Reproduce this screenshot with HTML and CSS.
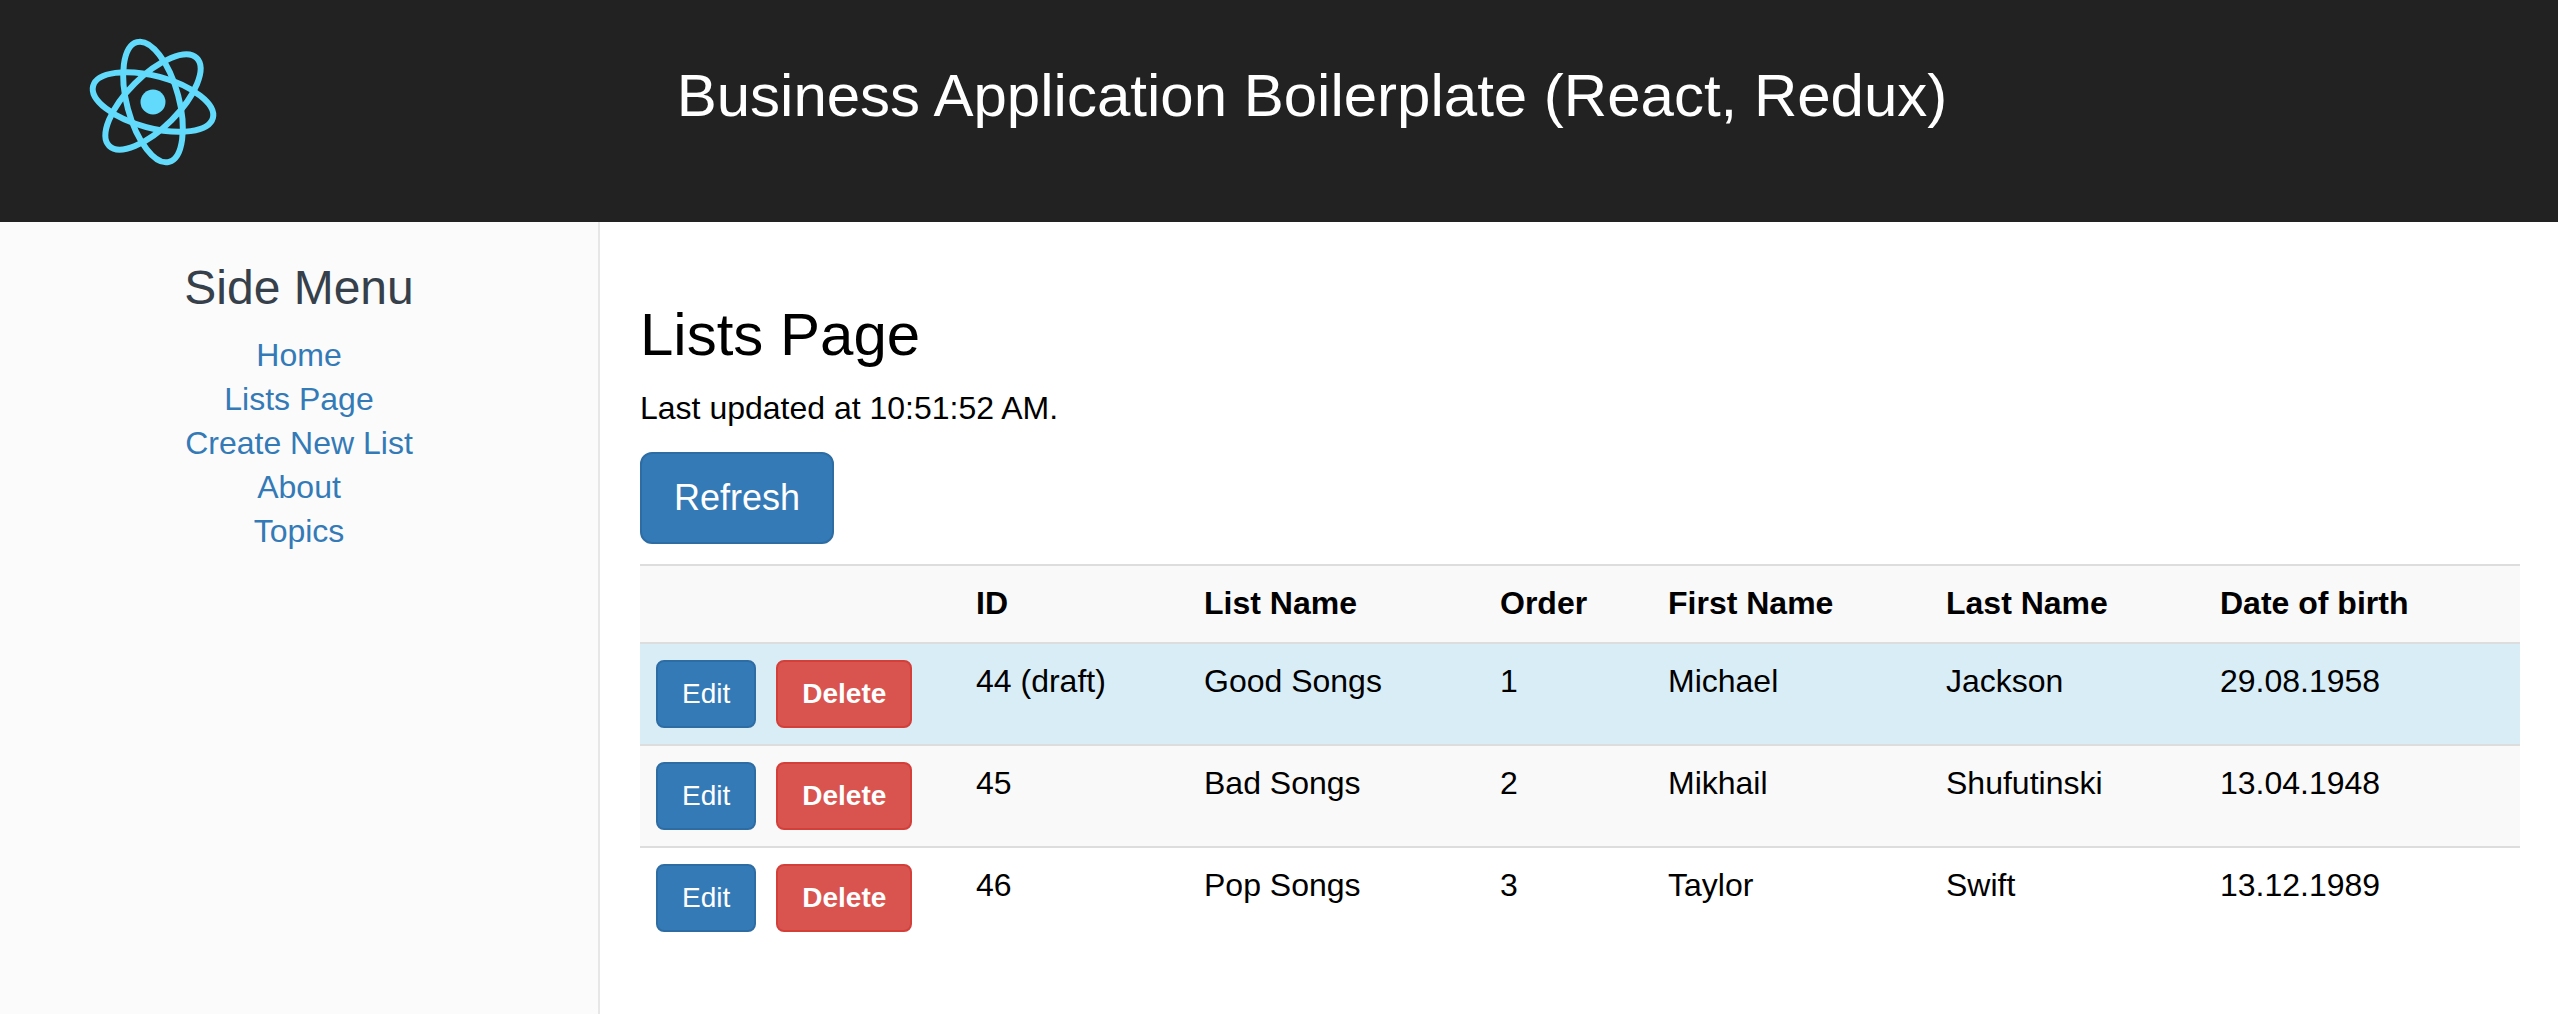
FILE: index.html
```html
<!doctype html>
<html lang="en">
<head>
<meta charset="utf-8">
<title>Business Application Boilerplate</title>
<link rel="stylesheet" href="styles.css">
</head>
<body>

	<header class="appHeader">
		<svg class="appLogo" viewBox="0 0 140 140" width="140" height="140" aria-hidden="true">
			<g fill="none" stroke="#61dafb" stroke-width="6">
				<ellipse cx="70" cy="70" rx="62" ry="26" transform="rotate(15 70 70)"/>
				<ellipse cx="70" cy="70" rx="62" ry="26" transform="rotate(75 70 70)"/>
				<ellipse cx="70" cy="70" rx="62" ry="26" transform="rotate(135 70 70)"/>
			</g>
			<circle cx="70" cy="70" r="12.5" fill="#61dafb"/>
		</svg>
		<h1 class="appTitle">Business Application Boilerplate (React, Redux)</h1>
	</header>

	<div class="appBody">

		<nav class="sideMenu">
			<h3>Side Menu</h3>
			<a href="#">Home</a>
			<a href="#">Lists Page</a>
			<a href="#">Create New List</a>
			<a href="#">About</a>
			<a href="#">Topics</a>
		</nav>

		<main class="content">
			<h2>Lists Page</h2>
			<p class="updated">Last updated at 10:51:52 AM.</p>
			<button class="btn btnPrimary btnLarge">Refresh</button>

			<table class="listTable">
				<colgroup>
					<col class="colActions">
					<col class="colId">
					<col class="colName">
					<col class="colOrder">
					<col class="colFirst">
					<col class="colLast">
					<col class="colBirth">
				</colgroup>
				<thead>
					<tr>
						<th></th>
						<th>ID</th>
						<th>List Name</th>
						<th>Order</th>
						<th>First Name</th>
						<th>Last Name</th>
						<th>Date of birth</th>
					</tr>
				</thead>
				<tbody>
					<tr class="rowDraft">
						<td><button class="btn btnPrimary">Edit</button><button class="btn btnDanger">Delete</button></td>
						<td>44 (draft)</td>
						<td>Good Songs</td>
						<td>1</td>
						<td>Michael</td>
						<td>Jackson</td>
						<td>29.08.1958</td>
					</tr>
					<tr class="rowStriped">
						<td><button class="btn btnPrimary">Edit</button><button class="btn btnDanger">Delete</button></td>
						<td>45</td>
						<td>Bad Songs</td>
						<td>2</td>
						<td>Mikhail</td>
						<td>Shufutinski</td>
						<td>13.04.1948</td>
					</tr>
					<tr>
						<td><button class="btn btnPrimary">Edit</button><button class="btn btnDanger">Delete</button></td>
						<td>46</td>
						<td>Pop Songs</td>
						<td>3</td>
						<td>Taylor</td>
						<td>Swift</td>
						<td>13.12.1989</td>
					</tr>
				</tbody>
			</table>
		</main>

	</div>

</body>
</html>
```

FILE: styles.css
```css
* { box-sizing: border-box; }

html, body { height: 100%; }
body { color: #000; display: flex; flex-direction: column; font: 32px/44px "Liberation Sans", Arial, sans-serif; margin: 0; overflow: hidden; }

a { color: #337ab7; text-decoration: none; }

.appHeader { align-items: center; background-color: #222; color: #fff; display: flex; flex: 0 0 222px; padding: 0 0 0 83px; }
.appLogo { display: block; flex: none; margin-top: -18px; }
.appTitle { flex: 1; font-size: 60px; font-weight: normal; line-height: 1.1; margin: -30px 0 0; padding-right: 157px; text-align: center; }

.appBody { display: flex; flex: 1; min-height: 0; }

.sideMenu { background-color: #fbfbfb; border-right: 2px solid #e7e7e7; display: flex; flex: 0 0 600px; flex-direction: column; padding-top: 40px; text-align: center; }
.sideMenu h3 { color: #36404a; font-size: 48px; font-weight: normal; line-height: 1.1; margin: 0 0 18px; }

.content { flex: 1; min-width: 0; padding: 80px 38px 0 40px; }
.content h2 { font-size: 60px; font-weight: normal; line-height: 1.1; margin: 0 0 18px; }
.updated { margin: 0 0 22px; }

.btn { border: 2px solid transparent; border-radius: 8px; color: #fff; cursor: pointer; font: 28px/40px "Liberation Sans", Arial, sans-serif; padding: 12px 24px; }
.btnLarge { border-radius: 12px; display: block; font-size: 36px; line-height: 48px; padding: 20px 32px; }
.btnPrimary { background-color: #337ab7; border-color: #2e6da4; }
.btnDanger { background-color: #d9534f; border-color: #d43f3a; font-weight: bold; margin-left: 20px; }

.listTable { border-collapse: collapse; margin-top: 20px; table-layout: fixed; width: 100%; }
.listTable th, .listTable td { border-top: 2px solid #ddd; padding: 15px 16px 17px; text-align: left; vertical-align: top; }
.listTable th { background-color: #f9f9f9; font-weight: bold; }
.listTable td:first-child { padding: 16px; }
.listTable td .btn { display: inline-block; vertical-align: top; }

.rowDraft td { background-color: #d9edf7; }
.rowStriped td { background-color: #f9f9f9; }

.colActions { width: 320px; }
.colId { width: 228px; }
.colName { width: 296px; }
.colOrder { width: 168px; }
.colFirst { width: 278px; }
.colLast { width: 274px; }
.colBirth { width: 316px; }
```
